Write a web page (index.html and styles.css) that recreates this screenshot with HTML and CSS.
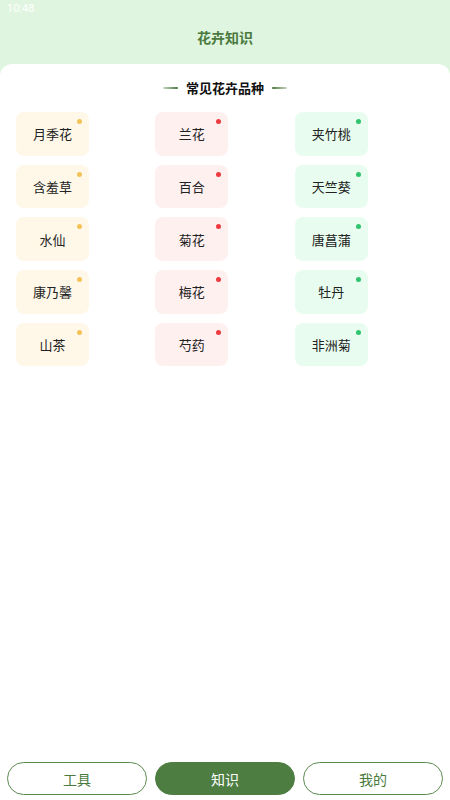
FILE: index.html
```html
<!DOCTYPE html>
<html lang="zh-CN">
<head>
<meta charset="utf-8">
<title>花卉知识</title>
<link rel="stylesheet" href="styles.css">
</head>
<body>
<div class="app">
  <header class="header">
    <div class="status">10:48</div>
    <h1 class="title">花卉知识</h1>
  </header>
  <main class="panel">
    <h2 class="section-title"><span class="line line-left"></span><span>常见花卉品种</span><span class="line line-right"></span></h2>
    <div class="grid">
      <div class="card yellow">月季花<i class="dot"></i></div>
      <div class="card red">兰花<i class="dot"></i></div>
      <div class="card green">夹竹桃<i class="dot"></i></div>
      <div class="card yellow">含羞草<i class="dot"></i></div>
      <div class="card red">百合<i class="dot"></i></div>
      <div class="card green">天竺葵<i class="dot"></i></div>
      <div class="card yellow">水仙<i class="dot"></i></div>
      <div class="card red">菊花<i class="dot"></i></div>
      <div class="card green">唐菖蒲<i class="dot"></i></div>
      <div class="card yellow">康乃馨<i class="dot"></i></div>
      <div class="card red">梅花<i class="dot"></i></div>
      <div class="card green">牡丹<i class="dot"></i></div>
      <div class="card yellow">山茶<i class="dot"></i></div>
      <div class="card red">芍药<i class="dot"></i></div>
      <div class="card green">非洲菊<i class="dot"></i></div>
    </div>
    <nav class="nav">
      <button class="nav-btn">工具</button>
      <button class="nav-btn active">知识</button>
      <button class="nav-btn">我的</button>
    </nav>
  </main>
</div>
</body>
</html>
```
FILE: styles.css
```css
* { box-sizing: border-box; }
html, body { margin: 0; padding: 0; height: 100%; }
body {
  font-family: "Noto Sans CJK SC", "Noto Sans", sans-serif;
  background: #dff5df;
  color: #222;
}
.app {
  height: 800px;
  display: flex;
  flex-direction: column;
  background: #dff5df;
}
.header {
  height: 64px;
  display: flex;
  flex-direction: column;
}
.status {
  height: 18px;
  padding: 2px 0 0 7px;
  font-family: "Roboto", sans-serif;
  font-size: 11px;
  line-height: 14px;
  color: #ffffff;
}
.title {
  margin: 0;
  height: 38px;
  line-height: 38px;
  text-align: center;
  font-size: 14px;
  font-weight: 700;
  color: #4a7a3d;
}
.panel {
  flex: 1;
  background: #ffffff;
  border-radius: 12px 12px 0 0;
  display: flex;
  flex-direction: column;
}
.section-title {
  margin: 14px 0 14px;
  height: 20px;
  display: flex;
  align-items: center;
  justify-content: center;
  gap: 8px;
  font-size: 13px;
  font-weight: 700;
  line-height: 20px;
  color: #111;
}
.line {
  width: 15px;
  height: 2px;
  border-radius: 1px;
}
.line-left { background: linear-gradient(to right, rgba(74,122,61,0.3), #4a7a3d); }
.line-right { background: linear-gradient(to right, #4a7a3d, rgba(74,122,61,0.3)); }
.grid {
  display: grid;
  grid-template-columns: repeat(3, 1fr);
  row-gap: 9.2px;
  padding: 0 16px;
}
.card {
  position: relative;
  width: 73px;
  height: 43.5px;
  border-radius: 8px;
  display: flex;
  align-items: center;
  justify-content: center;
  font-size: 13px;
  color: #222;
}
.dot {
  position: absolute;
  top: 7px;
  right: 7px;
  width: 5px;
  height: 5px;
  border-radius: 50%;
}
.yellow { background: #fff8e9; }
.yellow .dot { background: #f4c257; }
.red { background: #fff0f0; }
.red .dot { background: #ec3a3f; }
.green { background: #e8fdef; }
.green .dot { background: #2fc46b; }
.nav {
  margin-top: auto;
  display: flex;
  gap: 8px;
  padding: 0 7px 5px;
}
.nav-btn {
  flex: 1;
  height: 33px;
  border-radius: 17px;
  border: 1.5px solid #5b8a4f;
  background: #ffffff;
  color: #4a7a3d;
  font-family: "Noto Sans CJK SC", sans-serif;
  font-size: 14px;
  padding: 0;
}
.nav-btn.active {
  background: #4d7d41;
  border-color: #4d7d41;
  color: #ffffff;
}
```
